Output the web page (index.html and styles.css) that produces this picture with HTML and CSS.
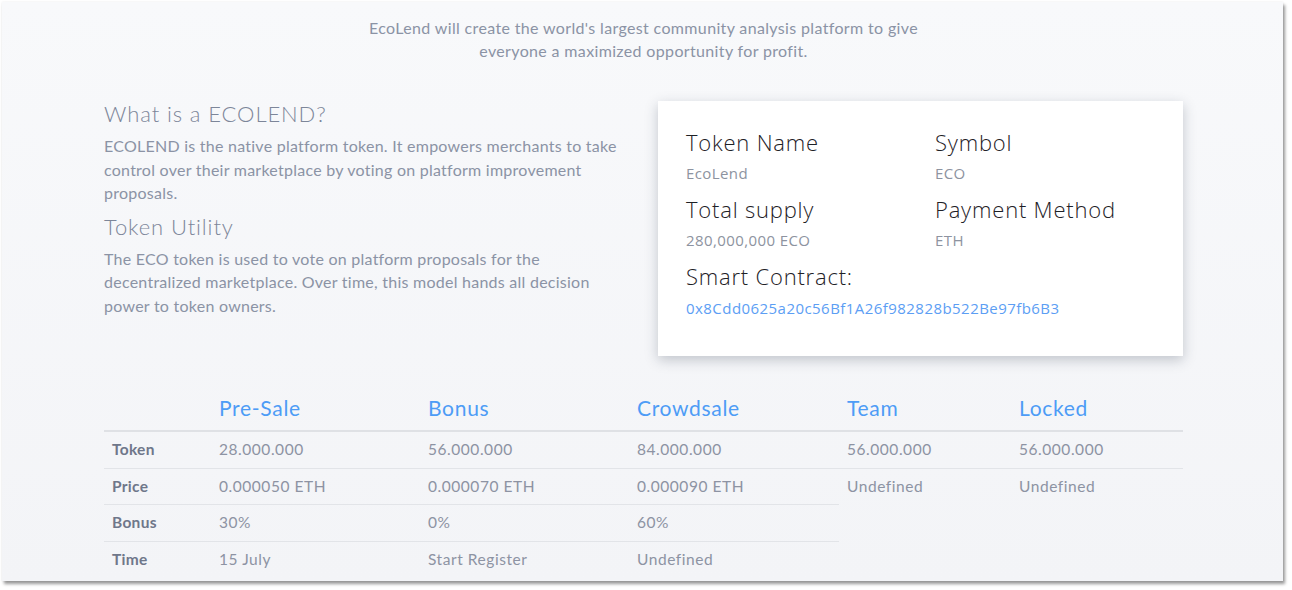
FILE: index.html
```html
<!DOCTYPE html>
<html lang="en">
<head>
    <meta charset="UTF-8">
    <meta name="viewport" content="width=device-width, initial-scale=1.0">
    <title>EcoLend - Token</title>
    <link rel="stylesheet" href="styles.css">
</head>
<body>
    <div class="panel">
        <div class="container">
            <p class="intro">EcoLend will create the world's largest community analysis platform to give<br>everyone a maximized opportunity for profit.</p>

            <div class="row">
                <div class="about">
                    <h3>What is a ECOLEND?</h3>
                    <p>ECOLEND is the native platform token. It empowers merchants to take control over their marketplace by voting on platform improvement proposals.</p>
                    <h3>Token Utility</h3>
                    <p>The ECO token is used to vote on platform proposals for the decentralized marketplace. Over time, this model hands all decision power to token owners.</p>
                </div>

                <div class="token-card">
                    <div class="token-item">
                        <div class="token-label">Token Name</div>
                        <div class="token-value">EcoLend</div>
                    </div>
                    <div class="token-item">
                        <div class="token-label">Symbol</div>
                        <div class="token-value">ECO</div>
                    </div>
                    <div class="token-item">
                        <div class="token-label">Total supply</div>
                        <div class="token-value">280,000,000 ECO</div>
                    </div>
                    <div class="token-item">
                        <div class="token-label">Payment Method</div>
                        <div class="token-value">ETH</div>
                    </div>
                    <div class="token-item wide">
                        <div class="token-label">Smart Contract:</div>
                        <a class="token-address" href="#">0x8Cdd0625a20c56Bf1A26f982828b522Be97fb6B3</a>
                    </div>
                </div>
            </div>

            <table class="sale-table">
                <colgroup>
                    <col style="width: 107px">
                    <col style="width: 209px">
                    <col style="width: 209px">
                    <col style="width: 210px">
                    <col style="width: 172px">
                    <col style="width: 172px">
                </colgroup>
                <thead>
                    <tr>
                        <th></th>
                        <th>Pre-Sale</th>
                        <th>Bonus</th>
                        <th>Crowdsale</th>
                        <th>Team</th>
                        <th>Locked</th>
                    </tr>
                </thead>
                <tbody>
                    <tr>
                        <td class="row-label">Token</td>
                        <td>28.000.000</td>
                        <td>56.000.000</td>
                        <td>84.000.000</td>
                        <td>56.000.000</td>
                        <td>56.000.000</td>
                    </tr>
                    <tr>
                        <td class="row-label">Price</td>
                        <td>0.000050 ETH</td>
                        <td>0.000070 ETH</td>
                        <td>0.000090 ETH</td>
                        <td>Undefined</td>
                        <td>Undefined</td>
                    </tr>
                    <tr>
                        <td class="row-label">Bonus</td>
                        <td>30%</td>
                        <td>0%</td>
                        <td>60%</td>
                        <td class="blank"></td>
                        <td class="blank"></td>
                    </tr>
                    <tr>
                        <td class="row-label">Time</td>
                        <td>15 July</td>
                        <td>Start Register</td>
                        <td>Undefined</td>
                        <td class="blank"></td>
                        <td class="blank"></td>
                    </tr>
                </tbody>
            </table>
        </div>
    </div>
</body>
</html>
```

FILE: styles.css
```css
body { margin: 0; padding: 2px 0 9px 2px; background: #fff; font-family: Lato, "Open Sans", sans-serif; }

.panel {
    width: 1281px; height: 579px; overflow: hidden;
    background: linear-gradient(#f8f9fb, #f3f4f7);
    box-shadow: 2px 3px 3px rgba(0, 0, 0, 0.4), 0 0 2px rgba(0, 0, 0, 0.08);
}
.container { width: 1079px; margin: 0 0 0 102px; }

.intro {
    margin: 0; padding-top: 14px; text-align: center;
    font-size: 16px; line-height: 23px; color: #8b93a5; letter-spacing: 0.35px;
}

.row { display: flex; justify-content: space-between; margin-top: 39px; }

.about { width: 525px; color: #8b93a5; }
.about h3 {
    margin: 0 0 7px; font-size: 22px; font-weight: 300; line-height: 26px;
    color: #7d8699; letter-spacing: 0.9px;
}
.about p { margin: 0 0 9px; font-size: 16px; line-height: 23.5px; letter-spacing: 0.25px; }

.token-card {
    width: 525px; box-sizing: border-box; background: #fff;
    padding: 28px 28px 37px;
    display: grid; grid-template-columns: 249px 1fr; row-gap: 12px;
    box-shadow: 0 4px 12px rgba(40, 50, 70, 0.25);
    font-family: "Open Sans", sans-serif;
}
.token-item.wide { grid-column: 1 / 3; }
.token-label {
    font-size: 22px; font-weight: 300; line-height: 26px; color: #1e2126;
    margin-bottom: 8px; letter-spacing: 0.8px;
}
.token-value { font-size: 15px; line-height: 21px; color: #8d93a0; letter-spacing: 0.4px; }
.token-address { font-size: 15px; line-height: 21px; color: #5c9ef4; text-decoration: none; letter-spacing: 0.45px; }

.sale-table { margin-top: 32px; width: 1079px; table-layout: fixed; border-collapse: collapse; }
.sale-table th {
    text-align: left; padding: 8px 8px 10px; font-size: 21px; font-weight: 400; line-height: 24px;
    color: #4d9cf6; border-bottom: 2px solid #dfe1e5; letter-spacing: 0.7px;
}
.sale-table td {
    padding: 7px 8px; font-size: 15.5px; line-height: 21.5px; color: #8d93a3;
    border-top: 1px solid #e2e4e8; letter-spacing: 0.55px;
}
.sale-table tbody tr:first-child td { border-top: none; }
.sale-table td.row-label { font-weight: 700; color: #6f778a; letter-spacing: 0.3px; }
.sale-table td.blank { border-top: none; }
```
